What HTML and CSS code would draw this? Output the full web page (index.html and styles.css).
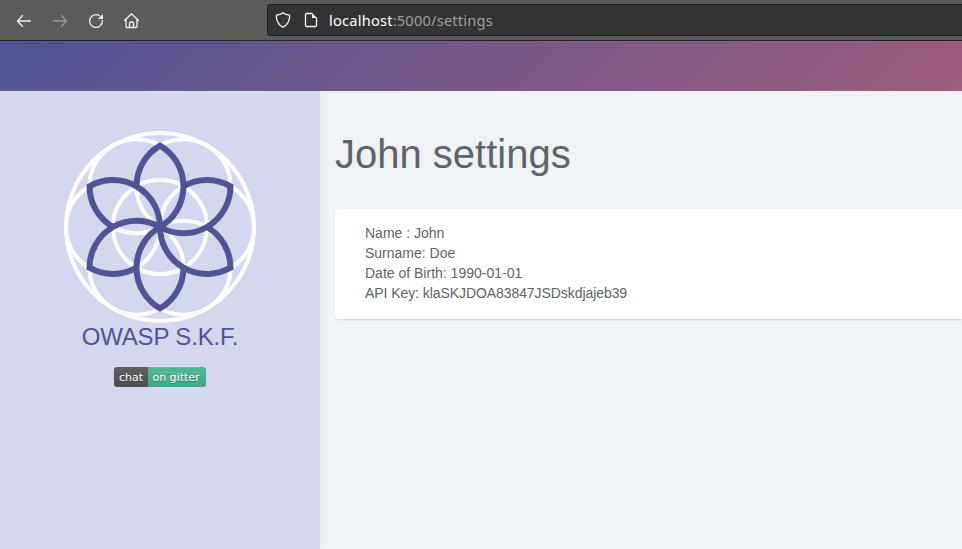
FILE: index.html
```html
<!DOCTYPE html>
<html lang="en">
<head>
<meta charset="utf-8">
<title>John settings</title>
<link rel="stylesheet" href="styles.css">
</head>
<body>
<div class="toolbar">
  <nav class="nav">
    <svg width="16" height="16" viewBox="0 0 16 16"><path d="M14.500 8H1.800M6.500 2.500L1.500 8L6.500 13.500"/></svg>
    <svg class="off" width="16" height="16" viewBox="0 0 16 16"><path d="M1.500 8h12.700M9.500 2.500L14.500 8L9.500 13.500"/></svg>
    <svg width="16" height="16" viewBox="0 0 16 16"><path d="M14.300 7.500A6.400 6.400 0 1 1 11.800 2.900"/><path class="solid" d="M15 1v5h-5z"/></svg>
    <svg width="16" height="16" viewBox="0 0 16 16"><path d="M.500 7.500L7.500 .800L14.500 7.500M2 6.500V13.400Q2 14.500 3.100 14.500H11.900Q13 14.500 13 13.400V6.500M5.500 14.500V10.500Q5.500 9 7 9H8Q9.500 9 9.500 10.500V14.500"/></svg>
  </nav>
  <div class="url">
    <svg width="16" height="16" viewBox="0 0 16 16"><path d="M8 .8C6.500 2.200 3.500 3 1.300 3.100C1.200 8.500 2.800 12.800 8 15.200C13.200 12.800 14.800 8.500 14.700 3.100C12.500 3 9.500 2.200 8 .8z"/></svg>
    <svg width="16" height="16" viewBox="0 0 16 16"><path d="M9 1.500H3.500Q2.500 1.500 2.500 2.500V13.500Q2.500 14.500 3.500 14.500H12.500Q13.500 14.500 13.500 13.500V6"/><path class="solid" d="M9 1L14 6H9z"/></svg>
    <span class="address"><b>localhost</b>:5000/settings</span>
  </div>
</div>
<header class="banner"></header>
<div class="page">
  <aside class="sidebar">
    <svg class="logo" width="192" height="192" viewBox="-96 -96 192 192">
      <defs><path id="petal" d="M-23.500 -40.700A47 47 0 0 1 0 -81.400A47 47 0 0 1 0 0"/></defs>
      <g class="rings">
        <circle r="94"/><circle r="47"/>
        <circle cx="47" r="47"/><circle cx="-47" r="47"/>
        <circle cx="23.500" cy="-40.700" r="47"/><circle cx="-23.500" cy="-40.700" r="47"/>
        <circle cx="23.500" cy="40.700" r="47"/><circle cx="-23.500" cy="40.700" r="47"/>
      </g>
      <g class="petals">
        <use href="#petal"/><use href="#petal" transform="rotate(60)"/><use href="#petal" transform="rotate(120)"/>
        <use href="#petal" transform="rotate(180)"/><use href="#petal" transform="rotate(240)"/><use href="#petal" transform="rotate(300)"/>
      </g>
    </svg>
    <div class="brand">OWASP S.K.F.</div>
    <div class="badge"><span class="chat">chat</span><span class="gitter">on gitter</span></div>
  </aside>
  <main class="content">
    <h1>John settings</h1>
    <section class="card">
      <div>Name : John</div>
      <div>Surname: Doe</div>
      <div>Date of Birth: 1990-01-01</div>
      <div class="key">API Key: klaSKJDOA83847JSDskdjajeb39</div>
    </section>
  </main>
</div>
</body>
</html>
```
FILE: styles.css
```css
* { box-sizing: border-box; }
body {
  margin: 0;
  height: 549px;
  overflow: hidden;
  display: flex;
  flex-direction: column;
  font: 14px/20px "Liberation Sans", sans-serif;
  color: #5e6468;
  background: #eff3f6;
}
svg { display: block; flex: none; }
.toolbar {
  height: 41px;
  flex: none;
  display: flex;
  padding: 4px 0 4px 16px;
  background: #5b5b5b;
  border-bottom: 1px solid #232323;
}
.nav { width: 251px; flex: none; display: flex; gap: 20px; padding-top: 9px; }
.nav svg, .url svg { fill: none; stroke: #f2f2f2; stroke-width: 1.3; stroke-linecap: round; stroke-linejoin: round; overflow: visible; }
.nav .off { stroke: #999; }
.nav .solid, .url .solid { fill: #f2f2f2; stroke: none; }
.url {
  flex: 1;
  height: 32px;
  display: flex;
  align-items: center;
  gap: 12px;
  padding-left: 7px;
  background: #343434;
  border: 1px solid #202020;
  border-right: 0;
  border-radius: 4px 0 0 4px;
}
.address { font: 14.6px/20px "Noto Sans", sans-serif; letter-spacing: .22px; color: #a0a0a0; margin-left: -2px; }
.address b { font-weight: 400; color: #fff; }
.banner { height: 50px; flex: none; background: linear-gradient(135deg, #505495 0%, #9e5d7c 100%); }
.page { flex: 1; display: flex; }
.sidebar {
  width: 320px;
  flex: none;
  display: flex;
  flex-direction: column;
  align-items: center;
  padding-top: 40px;
  background: #d5d7ee;
  box-shadow: 0 0 12px rgba(60, 70, 90, .07);
  clip-path: inset(0 -15px 0 0);
}
.rings { fill: none; stroke: #fff; stroke-width: 4; }
.petals { fill: none; stroke: #505495; stroke-width: 6; }
.brand { font-size: 24px; line-height: 28px; letter-spacing: -.18px; color: #505495; white-space: nowrap; }
.badge {
  display: flex;
  width: 92px;
  height: 20px;
  margin-top: 16px;
  border-radius: 3px;
  overflow: hidden;
  color: #fff;
  font: 11px/22px "DejaVu Sans", sans-serif;
  text-align: center;
  text-shadow: 0 1px 0 rgba(1, 1, 1, .3);
  white-space: nowrap;
}
.chat { width: 34px; background: linear-gradient(#606060, #4d4d4d); }
.gitter { width: 58px; padding-right: 2px; background: linear-gradient(#50ba99, #40a685); }
.content { flex: 1; padding: 41px 0 0 15px; }
h1 { margin: 0 0 33px; font-size: 40px; line-height: 44px; font-weight: 400; }
.card {
  height: 110px;
  padding: 14px 30px;
  background: #fff;
  border-radius: 3px 0 0 3px;
  box-shadow: 0 1px 2px rgba(0, 0, 0, .12);
}
.key { letter-spacing: -.07px; }
```
